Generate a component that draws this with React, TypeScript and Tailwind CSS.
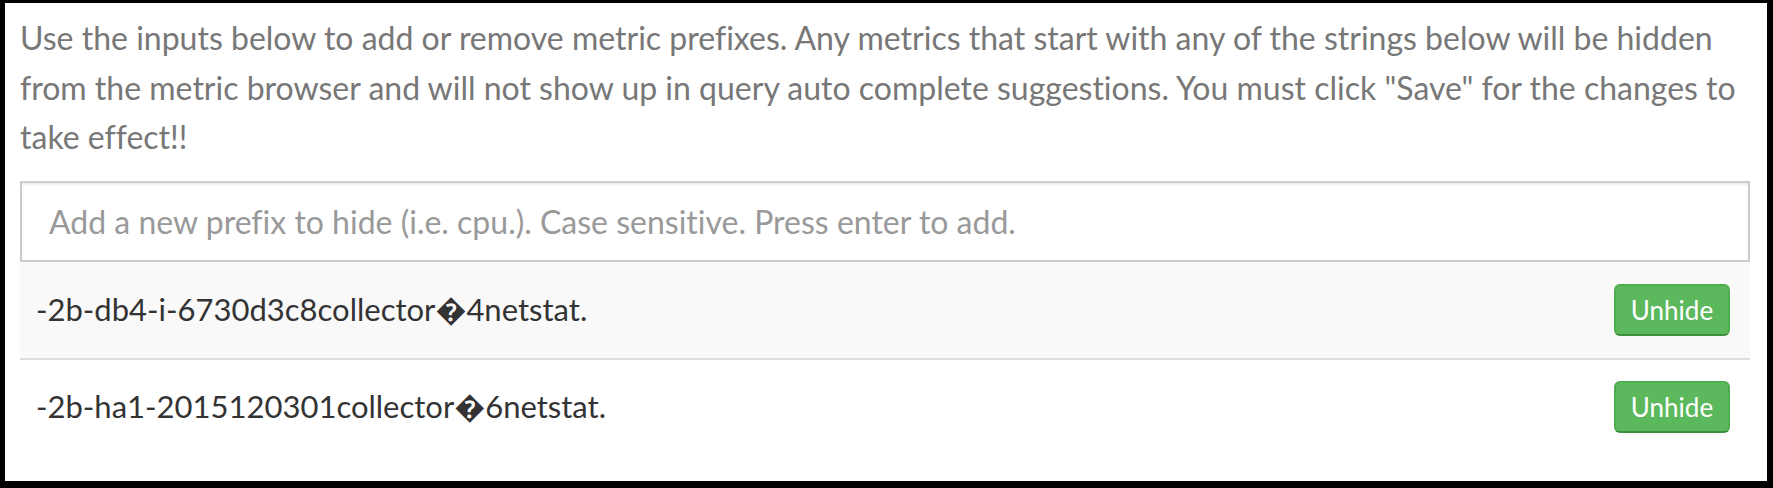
const prefixes = [
  '-2b-db4-i-6730d3c8collector\uFFFD4netstat.',
  '-2b-ha1-2015120301collector\uFFFD6netstat.',
]

function PrefixRow({ prefix, striped }: { prefix: string; striped: boolean }) {
  return (
    <div
      className={
        striped
          ? 'flex items-center justify-between h-[98px] bg-[#f9f9f9] border-b-2 border-[#dddddd] pl-[16px] pr-[20px]'
          : 'flex items-center justify-between h-[94px] bg-white pl-[16px] pr-[20px]'
      }
    >
      <span className="text-[31px] text-[#333333] leading-none">{prefix}</span>
      <button className="w-[116px] h-[52px] rounded-[6px] bg-[#5cb85c] border-2 border-[#4cae4c] border-b-[#3e8f3e] text-white text-[26px] leading-none flex items-center justify-center">
        Unhide
      </button>
    </div>
  )
}

export default function App() {
  return (
    <div
      className="w-[1773px] h-[488px] bg-white border-black border-l-[5px] border-t-[3px] border-r-[6px] border-b-[7px] overflow-hidden [font-variant-ligatures:none]"
      style={{ fontFamily: 'Lato, "Noto Sans", "DejaVu Sans", sans-serif' }}
    >
      <div className="pt-[10px] pl-[15px] pr-[17px]">
        <p className="text-[32px] leading-[49.5px] text-[#777777] mb-[19px]">
          Use the inputs below to add or remove metric prefixes. Any metrics that start with any of the strings below will be hidden from the metric browser and will not show up in query auto complete suggestions. You must click "Save" for the changes to take effect!!
        </p>
        <input
          type="text"
          placeholder="Add a new prefix to hide (i.e. cpu.). Case sensitive. Press enter to add."
          className="block w-full h-[81px] border-2 border-[#cccccc] bg-white pl-[27px] text-[32px] text-[#555555] placeholder:text-[#999999] shadow-[inset_0_2px_2px_rgba(0,0,0,0.075)] outline-none [font-variant-ligatures:none]"
        />
        {prefixes.map((p, i) => (
          <PrefixRow key={p} prefix={p} striped={i === 0} />
        ))}
      </div>
    </div>
  )
}
